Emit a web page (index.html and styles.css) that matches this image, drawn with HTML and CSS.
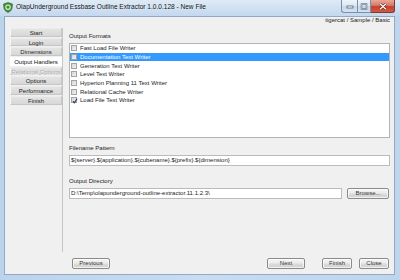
FILE: index.html
```html
<!DOCTYPE html>
<html>
<head>
<meta charset="utf-8">
<link rel="stylesheet" href="styles.css">
</head>
<body>
<div class="window">
  <div class="titlebar">
    <svg class="appicon" width="10" height="11" viewBox="0 0 10 11">
      <path d="M5 0.5 L9.5 2 L9 6.5 Q8 9.5 5 10.5 Q2 9.5 1 6.5 L0.5 2 Z" fill="#3f8f3a" stroke="#2a6a28" stroke-width="0.6"/>
      <circle cx="5" cy="5.2" r="2.2" fill="none" stroke="#e8f2c8" stroke-width="1.1"/>
    </svg>
    <span class="title">OlapUnderground Essbase Outline Extractor 1.0.0.128 - New File</span>
    <div class="controls">
      <div class="ctl min"><svg width="8" height="5" viewBox="0 0 8 5"><rect x="1" y="2" width="6" height="2" fill="#fff" stroke="#3b4f6b" stroke-width="0.7"/></svg></div>
      <div class="ctl max"><svg width="8" height="7" viewBox="0 0 8 7"><rect x="1.5" y="1" width="5" height="5" fill="none" stroke="#3b4f6b" stroke-width="1.4"/><rect x="1.5" y="1" width="5" height="5" fill="none" stroke="#fff" stroke-width="0.5"/></svg></div>
      <div class="ctl close"><svg width="10" height="7" viewBox="0 0 10 7"><path d="M2 0.8 L8 6.2 M8 0.8 L2 6.2" stroke="#5a1d16" stroke-width="2.4"/><path d="M2 0.8 L8 6.2 M8 0.8 L2 6.2" stroke="#fff" stroke-width="1.3"/></svg></div>
    </div>
  </div>
  <div class="client">
    <div class="context">tigercat / Sample / Basic</div>
    <div class="main">
      <nav class="steps">
        <div class="step">Start</div>
        <div class="step">Login</div>
        <div class="step">Dimensions</div>
        <div class="step current">Output Handlers</div>
        <div class="step disabled">Relational Options</div>
        <div class="step">Options</div>
        <div class="step">Performance</div>
        <div class="step">Finish</div>
      </nav>
      <section class="content">
        <div class="label label-top">Output Formats</div>
        <ul class="list">
          <li class="item"><span class="check"></span>Fast Load File Writer</li>
          <li class="item selected"><span class="check"></span>Documentation Text Writer</li>
          <li class="item"><span class="check"></span>Generation Text Writer</li>
          <li class="item"><span class="check"></span>Level Text Writer</li>
          <li class="item"><span class="check"></span>Hyperion Planning 11 Text Writer</li>
          <li class="item"><span class="check"></span>Relational Cache Writer</li>
          <li class="item"><span class="check checked"><svg width="6" height="6" viewBox="0 0 6 6"><path d="M1 3.2 L2.4 4.8 L5 0.8" fill="none" stroke="#1d3d7a" stroke-width="1.1"/></svg></span>Load File Text Writer</li>
        </ul>
        <div class="label label-mid">Filename Pattern</div>
        <div class="field">${server}.${application}.${cubename}.${prefix}.${dimension}</div>
        <div class="label label-low">Output Directory</div>
        <div class="field-row">
          <div class="field grow">D:\Temp\olapunderground-outline-extractor.11.1.2.3\</div>
          <button class="btn browse">Browse...</button>
        </div>
      </section>
    </div>
    <div class="actions">
      <button class="btn wide">Previous</button>
      <div class="spacer"></div>
      <button class="btn wide">Next</button>
      <button class="btn narrow finish">Finish</button>
      <button class="btn narrow close-btn">Close</button>
    </div>
  </div>
</div>
</body>
</html>
```
FILE: styles.css
```css
* { box-sizing: border-box; }
html, body { margin: 0; padding: 0; }
body {
  width: 400px;
  height: 280px;
  overflow: hidden;
  font-family: "Liberation Sans", Arial, sans-serif;
  font-size: 6px;
  color: #1b1b1b;
}
.window {
  width: 400px;
  height: 280px;
  display: flex;
  flex-direction: column;
  background: linear-gradient(90deg, #bcd3ec 0%, #c9dcf0 50%, #bfd5ec 100%);
}
.titlebar {
  height: 16px;
  flex: none;
  display: flex;
  align-items: flex-start;
  background: linear-gradient(180deg, #dfeaf6 0%, #cddff2 60%, #c3d7ee 100%);
  position: relative;
}
.appicon {
  margin: 2px 0 0 3px;
  flex: none;
}
.title {
  margin: 3px 0 0 3px;
  font-size: 6.55px;
  line-height: 8px;
  color: #111;
  text-shadow: 0 0 2px #eef4fb;
  white-space: nowrap;
}
.controls {
  position: absolute;
  top: 0;
  right: 5px;
  display: flex;
}
.ctl {
  height: 13px;
  display: flex;
  align-items: center;
  justify-content: center;
  border: 1px solid #7b8fa9;
  border-top: none;
}
.ctl.min {
  width: 16px;
  border-radius: 0 0 0 3px;
  border-right: none;
  background: linear-gradient(180deg, #eef4fa 0%, #dbe6f2 50%, #c7d7ea 51%, #d4e2f1 100%);
}
.ctl.max {
  width: 14px;
  background: linear-gradient(180deg, #eef4fa 0%, #dbe6f2 50%, #c7d7ea 51%, #d4e2f1 100%);
}
.ctl.close {
  width: 24px;
  border-left: none;
  border-color: #7d3a33;
  border-radius: 0 0 3px 0;
  background: linear-gradient(180deg, #e8a898 0%, #d87a68 45%, #c4412f 55%, #d45a40 100%);
}
.client {
  flex: 1;
  margin: 0 5px 5px 4px;
  border: 1px solid #91a9c6;
  background: #f0f0f0;
  display: flex;
  flex-direction: column;
}
.context {
  height: 11px;
  flex: none;
  text-align: right;
  padding: 0 4px 0 0;
  line-height: 7px;
  color: #222;
}
.main {
  height: 224px;
  flex: none;
  display: flex;
  padding-left: 5px;
}
.steps {
  width: 53px;
  flex: none;
  display: flex;
  flex-direction: column;
  gap: 1px;
  border-right: 1px solid #c5c5c5;
}
.step {
  height: 8.7px;
  line-height: 8px;
  text-align: center;
  color: #222;
  background: linear-gradient(180deg, #e4e4e4 0%, #d7d7d7 100%);
  border: 1px solid #c6c6c6;
  border-left-color: #f6f6f6;
  border-top-color: #ececec;
}
.step.current {
  background: #ffffff;
  border-color: #ffffff;
  color: #111;
}
.step.disabled {
  color: #ababab;
  text-shadow: 0.5px 0.5px 0 #ffffff;
}
.content {
  flex: 1;
  margin-left: 6px;
  padding-right: 4px;
  display: flex;
  flex-direction: column;
}
.label {
  line-height: 8px;
  margin-bottom: 3px;
  color: #1b1b1b;
}
.label-top { padding-top: 4px; }
.label-mid { padding-top: 6px; }
.label-low { padding-top: 11px; }
.list {
  list-style: none;
  margin: 0;
  padding: 0;
  height: 95px;
  border: 1px solid #b1b3b8;
  background: #ffffff;
}
.item {
  height: 8.7px;
  display: flex;
  align-items: center;
  padding-left: 1px;
  line-height: 8px;
  color: #1b1b1b;
  white-space: nowrap;
}
.item.selected {
  background: #3399ff;
  color: #ffffff;
}
.check {
  width: 6px;
  height: 6px;
  margin-right: 3px;
  flex: none;
  border: 1px solid #a3a3a3;
  background: linear-gradient(135deg, #d6d6d6 0%, #f2f2f2 100%);
  display: flex;
  align-items: center;
  justify-content: center;
  position: relative;
}
.check svg {
  position: absolute;
  left: -0.5px;
  top: -0.5px;
}
.field {
  height: 11px;
  border: 1px solid #b9bbbf;
  background: #ffffff;
  padding-left: 1px;
  line-height: 9px;
  color: #1b1b1b;
  white-space: nowrap;
  overflow: hidden;
}
.field-row {
  display: flex;
  gap: 5px;
}
.grow { flex: 1; }
.btn {
  height: 11px;
  padding: 0;
  margin: 0;
  font-family: inherit;
  font-size: 6px;
  line-height: 9px;
  color: #333;
  border: 1px solid #8a8a8a;
  border-radius: 2px;
  background: linear-gradient(180deg, #f4f4f4 0%, #ebebeb 48%, #dcdcdc 52%, #d0d0d0 100%);
  box-shadow: inset 0 0 0 1px rgba(255,255,255,0.7);
}
.browse {
  width: 42px;
  margin-right: 1px;
}
.actions {
  display: flex;
  margin-top: 6px;
  padding: 0 5px 0 67px;
}
.spacer { flex: 1; }
.wide { width: 38px; }
.narrow { width: 30px; }
.finish { margin-left: 17px; }
.close-btn { margin-left: 7px; }
```
